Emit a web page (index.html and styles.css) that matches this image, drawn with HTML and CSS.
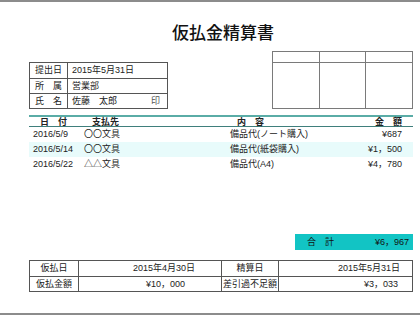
FILE: index.html
```html
<!DOCTYPE html>
<html lang="ja">
<head>
<meta charset="utf-8">
<link rel="stylesheet" href="styles.css">
</head>
<body>
<div class="page">
  <h1 class="title">仮払金精算書</h1>
  <div class="top">
    <div class="info">
      <div class="info-row"><div class="lbl">提出日</div><div class="val">2015年5月31日</div></div>
      <div class="info-row"><div class="lbl spread"><span>所</span><span>属</span></div><div class="val">営業部</div></div>
      <div class="info-row"><div class="lbl spread"><span>氏</span><span>名</span></div><div class="val name"><span>佐藤　太郎</span><span class="seal">印</span></div></div>
    </div>
    <div class="stamp">
      <div class="stamp-col"><div class="stamp-head"></div><div class="stamp-body"></div></div>
      <div class="stamp-col"><div class="stamp-head"></div><div class="stamp-body"></div></div>
      <div class="stamp-col"><div class="stamp-head"></div><div class="stamp-body"></div></div>
    </div>
  </div>
  <div class="list">
    <div class="row head">
      <div class="c-date hd">日　付</div>
      <div class="c-pay hd">支払先</div>
      <div class="c-desc hd">内　容</div>
      <div class="c-amt hd">金　額</div>
    </div>
    <div class="row">
      <div class="c-date">2016/5/9</div>
      <div class="c-pay">〇〇文具</div>
      <div class="c-desc">備品代(ノート購入)</div>
      <div class="c-amt">¥687</div>
    </div>
    <div class="row alt">
      <div class="c-date">2016/5/14</div>
      <div class="c-pay">〇〇文具</div>
      <div class="c-desc">備品代(紙袋購入)</div>
      <div class="c-amt">¥1，500</div>
    </div>
    <div class="row">
      <div class="c-date">2016/5/22</div>
      <div class="c-pay">△△文具</div>
      <div class="c-desc">備品代(A4)</div>
      <div class="c-amt">¥4，780</div>
    </div>
  </div>
  <div class="total-wrap">
    <div class="total"><span class="total-lbl">合　計</span><span>¥6，967</span></div>
  </div>
  <div class="summary">
    <div class="s-lbl">仮払日</div>
    <div class="s-val v1">2015年4月30日</div>
    <div class="s-lbl">精算日</div>
    <div class="s-val v2">2015年5月31日</div>
    <div class="s-lbl b">仮払金額</div>
    <div class="s-val v1 b off">¥10，000</div>
    <div class="s-lbl b">差引過不足額</div>
    <div class="s-val v2 b off2">¥3，033</div>
  </div>
</div>
</body>
</html>
```

FILE: styles.css
```css
* { box-sizing: border-box; margin: 0; padding: 0; }
html, body { width: 420px; height: 315px; overflow: hidden; background: #fff; }
body {
  font-family: "Liberation Sans", "Noto Sans CJK JP", sans-serif;
  font-size: 9px;
  color: #222;
}
.page {
  height: 315px;
  border-top: 2px solid #8c8c8c;
  border-bottom: 2px solid #8c8c8c;
  padding: 0 7px 0 29px;
  display: flex;
  flex-direction: column;
}
.title {
  margin-top: 20px;
  height: 20px;
  line-height: 20px;
  text-align: center;
  font-family: "Noto Sans CJK JP", sans-serif;
  font-size: 17px;
  font-weight: 500;
  color: #111;
  padding-left: 4px;
}
.top {
  margin-top: 9px;
  display: flex;
  justify-content: space-between;
  align-items: flex-end;
}
.info {
  width: 139px;
  border: 1px solid #555;
}
.info-row {
  display: flex;
  height: 15px;
  line-height: 14px;
}
.info-row + .info-row { border-top: 1px solid #555; }
.lbl {
  width: 38px;
  flex: none;
  border-right: 1px solid #555;
  text-align: center;
  white-space: nowrap;
}
.spread { display: flex; justify-content: space-between; padding: 0 5px; }
.val { flex: 1; padding-left: 4px; white-space: nowrap; }
.name { display: flex; justify-content: space-between; padding-right: 7px; }
.seal { color: #555; }
.stamp {
  width: 141px;
  height: 58px;
  border: 1px solid #7a7a7a;
  display: flex;
}
.stamp-col { flex: 1; display: flex; flex-direction: column; }
.stamp-col + .stamp-col { border-left: 1px solid #7a7a7a; }
.stamp-head { height: 11px; border-bottom: 1px solid #7a7a7a; }
.stamp-body { flex: 1; }
.list {
  margin-top: 6px;
  border-top: 2px solid #5aaca6;
}
.row {
  display: grid;
  grid-template-columns: 51px 146px 1fr 60px;
  padding: 0 11px 0 4px;
  height: 15px;
  line-height: 15px;
  white-space: nowrap;
}
.row.head {
  height: 10px;
  line-height: 10px;
  border-bottom: 1px solid #3f7f7c;
}
.hd { font-weight: 700; color: #222; }
.head .c-date { padding-left: 7px; }
.head .c-pay { padding-left: 8px; }
.head .c-desc { padding-left: 7px; }
.row.alt { background: #e8fbfb; }
.c-amt { text-align: right; }
.total-wrap {
  margin-top: 62px;
  display: flex;
  justify-content: flex-end;
}
.total {
  width: 118px;
  height: 16px;
  line-height: 16px;
  background: #12c4c4;
  display: flex;
  justify-content: space-between;
  padding: 0 4px 0 12px;
  color: #111;
}
.summary {
  margin-top: 10px;
  display: grid;
  grid-template-columns: 49px 143px 57px 1fr;
  border: 1px solid #555;
  white-space: nowrap;
}
.s-lbl, .s-val { height: 15px; line-height: 14px; }
.s-lbl {
  text-align: center;
  border-right: 1px solid #555;
}
.s-val { text-align: right; }
.s-val.v1 { padding-right: 26px; border-right: 1px solid #555; }
.s-val.v2 { padding-right: 12px; }
.s-val.off { padding-right: 36px; }
.s-val.off2 { padding-right: 14px; }
.b { border-top: 1px solid #555; }
```
